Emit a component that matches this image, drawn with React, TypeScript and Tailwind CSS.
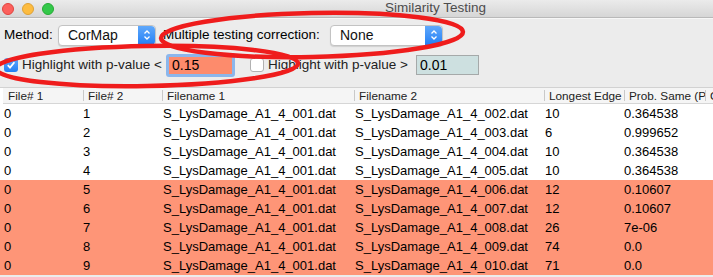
import React from "react";

type Row = {
  f1: string;
  f2: string;
  n1: string;
  n2: string;
  edge: string;
  prob: string;
  hot?: boolean;
};

const rows: Row[] = [
  { f1: "0", f2: "1", n1: "S_LysDamage_A1_4_001.dat", n2: "S_LysDamage_A1_4_002.dat", edge: "10", prob: "0.364538" },
  { f1: "0", f2: "2", n1: "S_LysDamage_A1_4_001.dat", n2: "S_LysDamage_A1_4_003.dat", edge: "6", prob: "0.999652" },
  { f1: "0", f2: "3", n1: "S_LysDamage_A1_4_001.dat", n2: "S_LysDamage_A1_4_004.dat", edge: "10", prob: "0.364538" },
  { f1: "0", f2: "4", n1: "S_LysDamage_A1_4_001.dat", n2: "S_LysDamage_A1_4_005.dat", edge: "10", prob: "0.364538" },
  { f1: "0", f2: "5", n1: "S_LysDamage_A1_4_001.dat", n2: "S_LysDamage_A1_4_006.dat", edge: "12", prob: "0.10607", hot: true },
  { f1: "0", f2: "6", n1: "S_LysDamage_A1_4_001.dat", n2: "S_LysDamage_A1_4_007.dat", edge: "12", prob: "0.10607", hot: true },
  { f1: "0", f2: "7", n1: "S_LysDamage_A1_4_001.dat", n2: "S_LysDamage_A1_4_008.dat", edge: "26", prob: "7e-06", hot: true },
  { f1: "0", f2: "8", n1: "S_LysDamage_A1_4_001.dat", n2: "S_LysDamage_A1_4_009.dat", edge: "74", prob: "0.0", hot: true },
  { f1: "0", f2: "9", n1: "S_LysDamage_A1_4_001.dat", n2: "S_LysDamage_A1_4_010.dat", edge: "71", prob: "0.0", hot: true },
];

const headers = ["File# 1", "File# 2", "Filename 1", "Filename 2", "Longest Edge", "Prob. Same (Prob. Cutoff)", "Corrected"];

const cols = "grid grid-cols-[80px_79px_192px_190px_80px_81px_120px]";

const Stepper: React.FC = () => (
  <div className="flex h-full w-[17px] items-center justify-center rounded-r-[4px] bg-gradient-to-b from-[#5fa8fb] to-[#1f7ff5]">
    <svg width="8" height="12" viewBox="0 0 8 12" fill="none" stroke="white" strokeWidth="1.3">
      <path d="M1.5 4.5 L4 2 L6.5 4.5" />
      <path d="M1.5 7.5 L4 10 L6.5 7.5" />
    </svg>
  </div>
);

const Select: React.FC<{ value: string; width: string }> = ({ value, width }) => (
  <div
    className={`flex h-[21px] ${width} items-stretch rounded-[4px] border border-[#c3c3c3] bg-white shadow-[0_1px_1px_rgba(0,0,0,0.12)]`}
  >
    <span className="flex flex-1 items-center pl-[9px] text-[14px] text-[#111]">{value}</span>
    <Stepper />
  </div>
);

const App: React.FC = () => {
  return (
    <div className="relative h-[277px] w-[713px] overflow-hidden bg-[#ececec] font-['Liberation_Sans',Arial,sans-serif] text-black">
      {/* title bar */}
      <div className="flex h-[18px] items-center border-b border-[#b9b9b9] bg-gradient-to-b from-[#ebebeb] to-[#d6d6d6]">
        <div className="ml-[2px] flex items-center gap-[8px]">
          <span className="h-[12px] w-[12px] rounded-full border border-[#e0443e] bg-[#fc605c]" />
          <span className="h-[12px] w-[12px] rounded-full border border-[#dea236] bg-[#fdbc40]" />
          <span className="h-[12px] w-[12px] rounded-full border border-[#27aa35] bg-[#34c84a]" />
        </div>
        <span className="ml-[331px] text-[13.5px] text-[#4d4d4d]">Similarity Testing</span>
      </div>
      <div className="h-px bg-[#f7f7f7]" />

      {/* controls */}
      <div className="px-[4px] pt-[5px] pb-[10px]">
        <div className="flex h-[22px] items-center text-[13.5px]">
          <span className="w-[54px]">Method:</span>
          <Select value="CorMap" width="w-[98px]" />
          <span className="ml-[7px] w-[167px]">Multiple testing correction:</span>
          <Select value="None" width="w-[113px]" />
        </div>
        <div className="mt-[7px] flex h-[24px] items-center text-[13.5px]">
          <span className="flex h-[14px] w-[14px] items-center justify-center rounded-[3px] bg-gradient-to-b from-[#5fa8fb] to-[#1f7ff5]">
            <svg width="10" height="10" viewBox="0 0 10 10" fill="none" stroke="white" strokeWidth="1.8">
              <path d="M1.8 5.2 L4 7.6 L8.4 2.2" />
            </svg>
          </span>
          <span className="ml-[4px] w-[144px] text-[#222]">Highlight with p-value &lt;</span>
          <div className="rounded-[3px] border-[3px] border-[#8bb6ec]">
            <div className="flex h-[17px] w-[63px] items-center bg-[#fd8b6c] pl-[3px] text-[14px]">0.15</div>
          </div>
          <span className="ml-[15px] h-[14px] w-[14px] rounded-[3px] border border-[#b1b1b1] bg-white" />
          <span className="ml-[4px] w-[148px] text-[#222]">Highlight with p-value &gt;</span>
          <div className="flex h-[20px] w-[63px] items-center border border-[#a5a9a9] bg-[#cde0e0] pl-[3px] text-[14px]">
            0.01
          </div>
        </div>
      </div>

      {/* table */}
      <div className="border-t border-[#d2d2d2] bg-white pl-[3px]">
        <div className={`${cols} h-[16px] border-b border-[#d6d6d6] bg-[#f5f5f5] text-[11.75px] text-[#222]`}>
          {headers.map((h, i) => (
            <div key={h} className="flex items-center overflow-hidden whitespace-nowrap">
              {i > 0 ? <span className="h-[11px] w-px shrink-0 bg-[#c9c9c9]" /> : null}
              <span className={i > 0 ? "ml-[4px]" : "ml-[5px]"}>{h}</span>
            </div>
          ))}
        </div>
        {rows.map((r) => (
          <div
            key={r.f2}
            className={`${cols} -ml-[3px] h-[19px] pl-[3px] text-[13px] ${r.hot ? "bg-[#fe9577]" : "bg-white"}`}
          >
            <div className="flex items-center pl-[1px]">{r.f1}</div>
            <div className="flex items-center">{r.f2}</div>
            <div className="flex items-center pl-[1px]">{r.n1}</div>
            <div className="flex items-center pl-[1px]">{r.n2}</div>
            <div className="flex items-center pl-[1px]">{r.edge}</div>
            <div className="flex items-center">{r.prob}</div>
            <div />
          </div>
        ))}
      </div>

      {/* red annotation ellipses */}
      <svg className="pointer-events-none absolute inset-0" width="713" height="277" viewBox="0 0 713 277" fill="none">
        <ellipse cx="312" cy="35" rx="151" ry="22" transform="rotate(-1.2 312 35)" stroke="#ef1c1c" strokeWidth="4.5" />
        <ellipse cx="147" cy="66" rx="151" ry="20" transform="rotate(-1 147 66)" stroke="#ef1c1c" strokeWidth="4.5" />
      </svg>
    </div>
  );
};

export default App;
